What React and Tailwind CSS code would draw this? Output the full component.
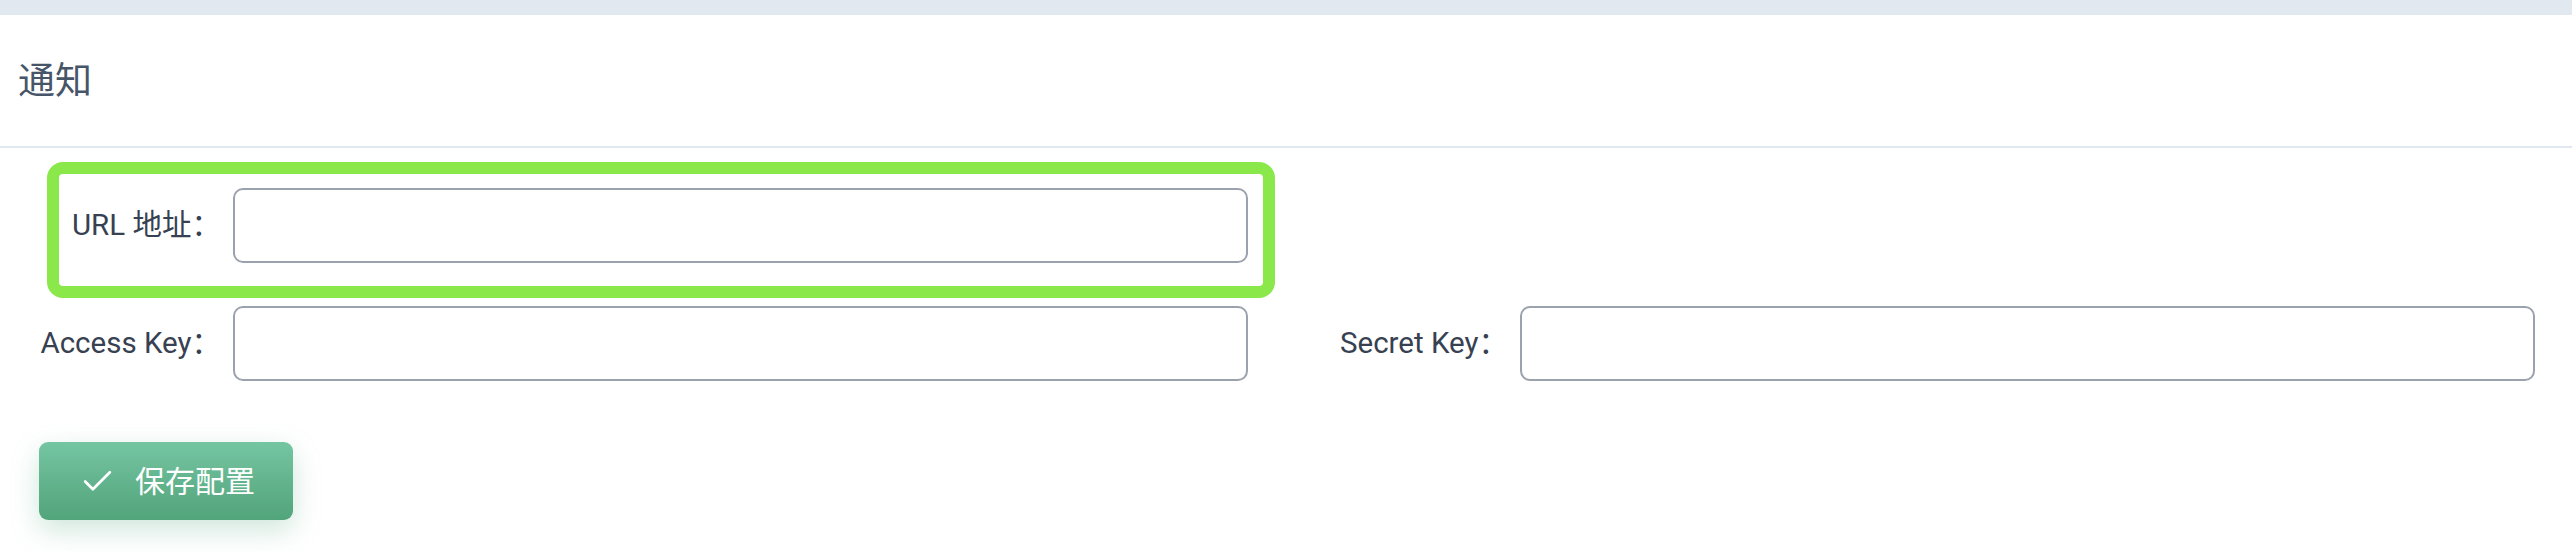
import React from 'react';
import { Check } from 'lucide-react';

const font = "font-['Roboto','Noto_Sans_CJK_SC',sans-serif]";

function Field({ label, children }) {
  return (
    <div className="relative flex items-center">
      <label className="w-[196px] shrink-0 pr-[12px] text-right text-[29.5px] text-[#374151] whitespace-nowrap">
        {label}
      </label>
      <input
        type="text"
        className="flex-1 h-[75px] border-2 border-[#9ca2ad] rounded-[10px] bg-white outline-none px-4 text-[28px]"
      />
      {children}
    </div>
  );
}

export default function App() {
  return (
    <div className={`w-[2572px] h-[552px] bg-white overflow-hidden ${font}`}>
      <div className="h-[15px] bg-[#e2e8f0]" />
      <div className="h-[133px] border-b-2 border-[#e2e8f0] flex items-center pl-[18px]">
        <h2 className="text-[37px] text-[#475569] font-normal translate-y-[1px]">通知</h2>
      </div>

      <div className="px-[37px] pt-[40px]">
        <div className="grid grid-cols-2 gap-x-[76px] gap-y-[43px]">
          <Field label="URL 地址：">
            {/* highlight frame */}
            <div className="absolute left-[10px] -right-[27px] -top-[26px] -bottom-[35px] border-[12px] border-[#8be84b] rounded-[16px] pointer-events-none" />
          </Field>
          <div />
          <Field label="Access Key：" />
          <Field label="Secret Key：" />
        </div>

        <button className="mt-[61px] ml-[2px] w-[254px] h-[78px] flex items-center gap-[19px] pl-[40px] rounded-[9px] bg-linear-to-b from-[#74c5a2] to-[#52a47b] text-white text-[30px] shadow-[0_10px_28px_rgba(82,165,124,0.28)]">
          <Check size={37} strokeWidth={1.75} />
          <span>保存配置</span>
        </button>
      </div>
    </div>
  );
}
